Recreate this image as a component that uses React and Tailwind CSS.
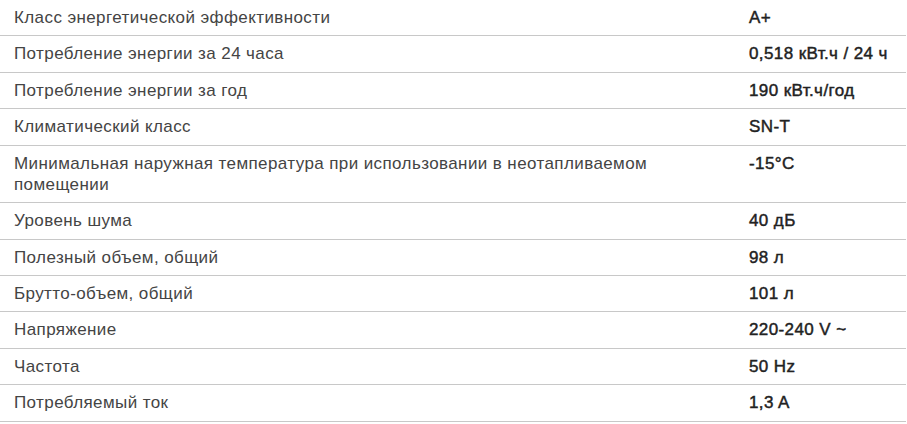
const rows = [
  ["Класс энергетической эффективности", "A+"],
  ["Потребление энергии за 24 часа", "0,518 кВт.ч / 24 ч"],
  ["Потребление энергии за год", "190 кВт.ч/год"],
  ["Климатический класс", "SN-T"],
  ["Минимальная наружная температура при использовании в неотапливаемом помещении", "-15°C"],
  ["Уровень шума", "40 дБ"],
  ["Полезный объем, общий", "98 л"],
  ["Брутто-объем, общий", "101 л"],
  ["Напряжение", "220-240 V ~"],
  ["Частота", "50 Hz"],
  ["Потребляемый ток", "1,3 A"],
];

export default function App() {
  return (
    <div className="w-[906px] bg-white font-['Liberation_Sans',Arial,sans-serif] text-[17px] leading-[21.2px] tracking-[0.4px]">
      {rows.map(([k, v], i) => (
        <div key={i} className="grid grid-cols-[735px_1fr] border-b border-[#c8c8c8]">
          <div className="px-[14px] py-[7.1px] text-[#444]">{k}</div>
          <div className="px-[14px] py-[7.1px] text-[#222] [-webkit-text-stroke:0.45px_#222]">{v}</div>
        </div>
      ))}
    </div>
  );
}
